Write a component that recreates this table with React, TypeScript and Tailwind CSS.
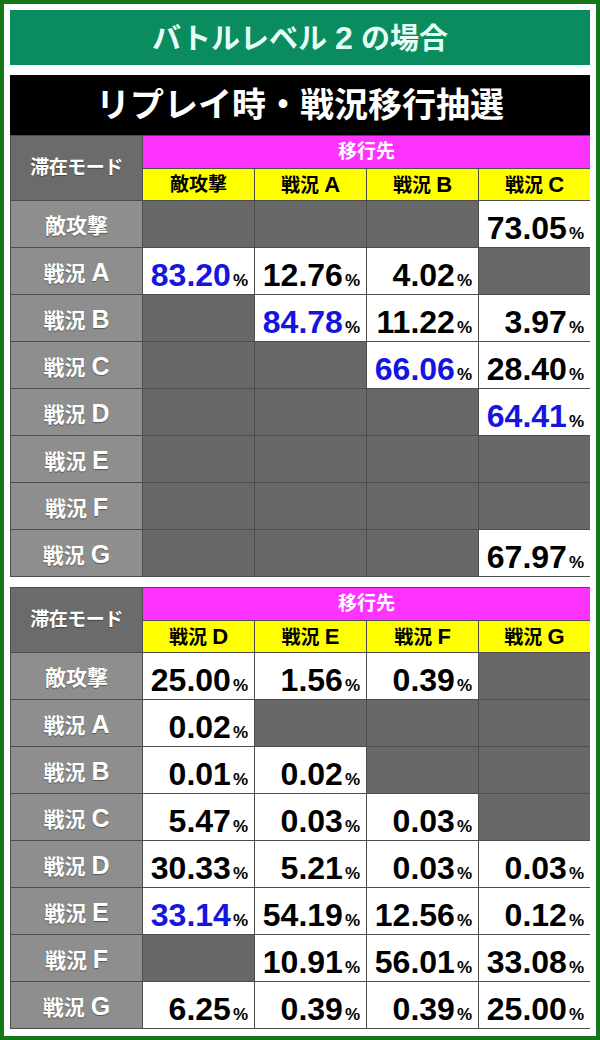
import React from "react";

type Cell = { v: string; blue?: boolean } | null;

const FONT = "font-['Liberation_Sans','Noto_Sans_CJK_JP',sans-serif]";

const t1Cols = ["敵攻撃", "戦況 A", "戦況 B", "戦況 C"];
const t1Rows: [string, Cell[]][] = [
  ["敵攻撃", [null, null, null, { v: "73.05" }]],
  ["戦況 A", [{ v: "83.20", blue: true }, { v: "12.76" }, { v: "4.02" }, null]],
  ["戦況 B", [null, { v: "84.78", blue: true }, { v: "11.22" }, { v: "3.97" }]],
  ["戦況 C", [null, null, { v: "66.06", blue: true }, { v: "28.40" }]],
  ["戦況 D", [null, null, null, { v: "64.41", blue: true }]],
  ["戦況 E", [null, null, null, null]],
  ["戦況 F", [null, null, null, null]],
  ["戦況 G", [null, null, null, { v: "67.97" }]],
];

const t2Cols = ["戦況 D", "戦況 E", "戦況 F", "戦況 G"];
const t2Rows: [string, Cell[]][] = [
  ["敵攻撃", [{ v: "25.00" }, { v: "1.56" }, { v: "0.39" }, null]],
  ["戦況 A", [{ v: "0.02" }, null, null, null]],
  ["戦況 B", [{ v: "0.01" }, { v: "0.02" }, null, null]],
  ["戦況 C", [{ v: "5.47" }, { v: "0.03" }, { v: "0.03" }, null]],
  ["戦況 D", [{ v: "30.33" }, { v: "5.21" }, { v: "0.03" }, { v: "0.03" }]],
  ["戦況 E", [{ v: "33.14", blue: true }, { v: "54.19" }, { v: "12.56" }, { v: "0.12" }]],
  ["戦況 F", [null, { v: "10.91" }, { v: "56.01" }, { v: "33.08" }]],
  ["戦況 G", [{ v: "6.25" }, { v: "0.39" }, { v: "0.39" }, { v: "25.00" }]],
];

function Label({ text, big }: { text: string; big: string }) {
  const parts = text.split(" ");
  if (parts.length === 1) return <span>{text}</span>;
  return (
    <span>
      {parts[0]} <span className={big}>{parts[1]}</span>
    </span>
  );
}

function Table({ cols, rows }: { cols: string[]; rows: [string, Cell[]][] }) {
  return (
    <div className="grid grid-cols-[131px_111px_111px_111px_111px] grid-rows-[32px_31px_repeat(8,46px)] gap-px bg-[#4d4d4d] p-px">
      <div className="row-span-2 bg-[#6b6b6b] flex items-center justify-center text-white text-[19px] font-bold tracking-[-0.5px] [text-shadow:0_1px_1px_rgba(0,0,0,0.35)]">
        滞在モード
      </div>
      <div className="col-span-4 bg-[#ff33ff] flex items-center justify-center text-white text-[19px] font-bold">
        移行先
      </div>
      {cols.map((c) => (
        <div key={c} className="bg-[#ffff00] flex items-center justify-center text-black text-[19px] font-bold leading-none">
          <Label text={c} big="text-[22px]" />
        </div>
      ))}
      {rows.map(([label, cells]) => (
        <React.Fragment key={label}>
          <div className="bg-[#8e8e8e] flex items-center justify-center text-white text-[21px] font-bold pt-[2px] leading-none [text-shadow:0_1px_1px_rgba(0,0,0,0.4)]">
            <Label text={label} big="text-[25px]" />
          </div>
          {cells.map((c, i) =>
            c ? (
              <div key={i} className="bg-white flex items-end justify-end pr-[6px] pb-[3px]">
                <div className="flex items-baseline leading-none">
                  <span className={`text-[32px] font-bold ${c.blue ? "text-[#1515e0]" : "text-black"}`}>{c.v}</span>
                  <span className="text-[17px] font-bold text-black ml-[2px]">%</span>
                </div>
              </div>
            ) : (
              <div key={i} className="bg-[#686868]" />
            )
          )}
        </React.Fragment>
      ))}
    </div>
  );
}

export default function App() {
  return (
    <div className={`w-[600px] h-[1040px] border-4 border-[#14781a] bg-white px-[6px] pt-[6px] ${FONT}`}>
      <div className="h-[55px] bg-[#0b8c5e] flex items-center justify-center text-[#e6fff6] text-[29px] font-bold">
        <span>
          バトルレベル <span className="text-[32px]">2</span> の場合
        </span>
      </div>
      <div className="mt-[10px] h-[60px] bg-black flex items-center justify-center text-white text-[34px] font-bold">
        リプレイ時・戦況移行抽選
      </div>
      <Table cols={t1Cols} rows={t1Rows} />
      <div className="h-[10px]" />
      <Table cols={t2Cols} rows={t2Rows} />
    </div>
  );
}
